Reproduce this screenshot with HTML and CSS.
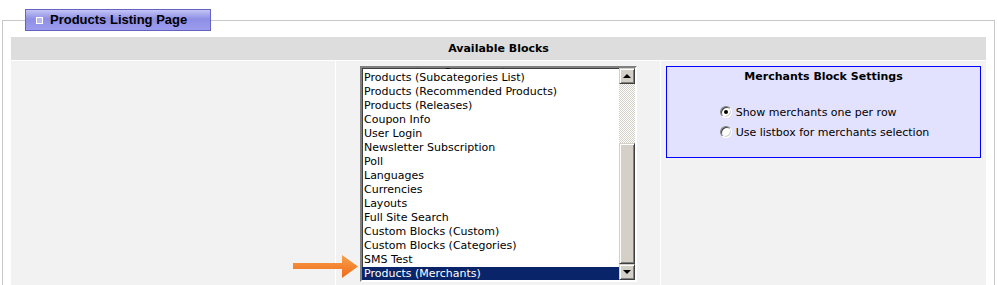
FILE: index.html
```html
<!DOCTYPE html>
<html lang="en">
<head>
  <meta charset="UTF-8">
  <title>Products Listing Page</title>
  <link rel="stylesheet" href="styles.css">
</head>
<body>
  <fieldset class="page-box">
    <legend class="page-title"><span class="title-icon"></span>Products Listing Page</legend>

    <div class="blocks">
      <div class="blocks-header">Available Blocks</div>
      <div class="blocks-row">
        <div class="cell"></div>
        <div class="cell cell-list">
          <div class="listbox">
            <ul class="list-items">
              <li>Products (Categories List)</li>
              <li>Products (Subcategories List)</li>
              <li>Products (Recommended Products)</li>
              <li>Products (Releases)</li>
              <li>Coupon Info</li>
              <li>User Login</li>
              <li>Newsletter Subscription</li>
              <li>Poll</li>
              <li>Languages</li>
              <li>Currencies</li>
              <li>Layouts</li>
              <li>Full Site Search</li>
              <li>Custom Blocks (Custom)</li>
              <li>Custom Blocks (Categories)</li>
              <li>SMS Test</li>
              <li class="selected">Products (Merchants)</li>
            </ul>
            <div class="scrollbar">
              <div class="sb-btn"><span class="tri-up"></span></div>
              <div class="sb-track"></div>
              <div class="sb-thumb"></div>
              <div class="sb-btn"><span class="tri-down"></span></div>
            </div>
          </div>
          <svg class="pointer" width="68" height="26" viewBox="0 0 68 26">
            <defs>
              <linearGradient id="arrowFill" x1="0" y1="0" x2="0" y2="1">
                <stop offset="0" stop-color="#f9a04a"/>
                <stop offset="1" stop-color="#ef6a1a"/>
              </linearGradient>
            </defs>
            <path d="M1 8 H50 V0 L66 11.5 L50 23 V14 H1 Z" fill="url(#arrowFill)"/>
          </svg>
        </div>
        <div class="cell">
          <div class="settings">
            <div class="settings-title">Merchants Block Settings</div>
            <div class="options">
              <label class="option"><span class="radio checked"></span>Show merchants one per row</label>
              <label class="option"><span class="radio"></span>Use listbox for merchants selection</label>
            </div>
          </div>
        </div>
      </div>
    </div>
  </fieldset>
</body>
</html>
```

FILE: styles.css
```css
body {
  margin: 0;
  padding: 9px 2px 0;
  background: #fff;
  font-family: "DejaVu Sans", Verdana, sans-serif;
  font-size: 11px;
  color: #000;
}
.page-box {
  margin: 0;
  padding: 6px 8px 8px;
  border: 1px solid #c8c8c8;
}
.page-title {
  margin-left: 14px;
  padding: 0 23px 0 10px;
  height: 20px;
  line-height: 20px;
  border: 1px solid #6464c0;
  background: linear-gradient(#c4c4f6, #8e8ee6 45%, #9c9cee);
  font-family: "Liberation Sans", Arial, sans-serif;
  font-weight: bold;
  font-size: 13px;
  display: flex;
  align-items: center;
}
.title-icon {
  width: 5px;
  height: 5px;
  border: 1px solid #fff;
  background: #b8b8f2;
  margin-right: 7px;
  margin-top: 1px;
}
.blocks-header {
  background: #dddddd;
  height: 23px;
  line-height: 23px;
  text-align: center;
  font-weight: bold;
  margin-bottom: 1px;
}
.blocks-row {
  display: grid;
  grid-template-columns: 324px 324px 1fr;
  gap: 1px;
}
.cell {
  background: #f2f2f2;
  padding-top: 5px;
  min-height: 230px;
}
.cell-list {
  position: relative;
}
.listbox {
  position: relative;
  width: 273px;
  height: 212px;
  margin-left: 24px;
  border: 2px solid;
  border-color: #808080 #fff #fff #808080;
  box-shadow: inset 1px 1px 0 #404040, inset -1px -1px 0 #d4d0c8;
  background: #fff;
  overflow: hidden;
}
.list-items {
  list-style: none;
  margin: -11px 16px 0 0;
  padding: 0;
}
.list-items li {
  height: 14px;
  line-height: 14px;
  padding-left: 2px;
  white-space: nowrap;
}
.list-items .selected {
  background: #0a246a;
  color: #fff;
}
.scrollbar {
  position: absolute;
  top: 0;
  right: 0;
  width: 16px;
  height: 212px;
  display: flex;
  flex-direction: column;
}
.sb-btn, .sb-thumb {
  box-sizing: border-box;
  background: #d4d0c8;
  border: 1px solid;
  border-color: #d4d0c8 #404040 #404040 #d4d0c8;
  box-shadow: inset 1px 1px 0 #fff, inset -1px -1px 0 #808080;
}
.sb-btn {
  height: 16px;
  display: flex;
  align-items: center;
  justify-content: center;
}
.sb-track {
  height: 59px;
  background: repeating-conic-gradient(#d4d0c8 0 25%, #fff 0 50%) 0 0 / 2px 2px;
}
.sb-thumb {
  flex: 1;
}
.tri-up, .tri-down {
  width: 0;
  height: 0;
  border-left: 4px solid transparent;
  border-right: 4px solid transparent;
}
.tri-up {
  border-bottom: 4px solid #000;
}
.tri-down {
  border-top: 4px solid #000;
}
.pointer {
  position: absolute;
  left: -44px;
  top: 194px;
}
.settings {
  margin: 0 5px;
  height: 90px;
  border: 1px solid #0000ff;
  background: #e2e2fe;
}
.settings-title {
  text-align: center;
  font-weight: bold;
  padding-top: 3px;
  line-height: 14px;
}
.options {
  width: fit-content;
  margin: 18px auto 0;
  padding-left: 2px;
}
.option {
  display: flex;
  align-items: center;
  height: 20px;
}
.radio {
  box-sizing: border-box;
  width: 12px;
  height: 12px;
  margin-right: 4px;
  border-radius: 50%;
  border: 1px solid;
  border-color: #808080 #fff #fff #808080;
  box-shadow: inset 1px 1px 0 #404040, inset -1px -1px 0 #d4d0c8;
  background: #fff;
  position: relative;
}
.radio.checked::after {
  content: "";
  position: absolute;
  left: 3px;
  top: 3px;
  width: 4px;
  height: 4px;
  border-radius: 50%;
  background: #000;
}
```
